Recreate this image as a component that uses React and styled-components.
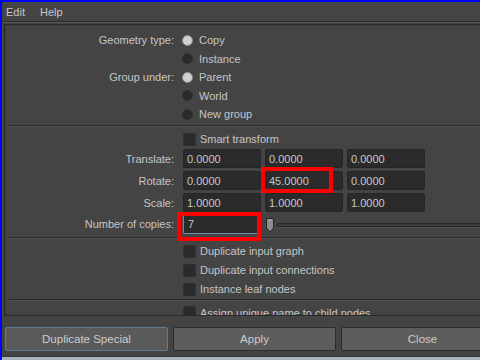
import React from "react";
import styled, { createGlobalStyle } from "styled-components";

const GlobalStyle = createGlobalStyle`
  html, body {
    margin: 0;
    padding: 0;
    background: #444444;
    overflow: hidden;
  }
  body {
    font-family: "Liberation Sans", Arial, sans-serif;
    font-size: 11px;
    color: #c6c6c6;
  }
`;

const Window = styled.div`
  width: 480px;
  height: 360px;
  box-sizing: border-box;
  border-top: 2px solid #0000ff;
  border-left: 2px solid #0000ff;
  background: #444444;
  display: flex;
  flex-direction: column;
  overflow: hidden;
`;

const MenuBar = styled.div`
  height: 19px;
  display: flex;
  align-items: center;
  gap: 15px;
  padding-left: 4px;
  border-bottom: 1px solid #2c2c2c;
  box-shadow: 0 1px 0 #585858;
`;

const MenuItem = styled.span`
  color: #c8c8c8;
`;

const Frame = styled.div`
  box-sizing: border-box;
  height: 292px;
  margin: 2px -20px 0 2px;
  border: 1px solid #2a2a2a;
  box-shadow: inset 1px 1px 0 #3a3a3a;
  overflow: hidden;
  flex-shrink: 0;
`;

const Section = styled.div`
  display: flex;
  flex-direction: column;
  gap: ${(p) => p.$gap || 0}px;
  padding-top: ${(p) => p.$top || 0}px;
`;

const Divider = styled.div`
  height: 0;
  margin: ${(p) => p.$mt || 0}px 0 0 4px;
  border-top: 1px solid #2a2a2a;
  border-bottom: 1px solid #505050;
`;

const Row = styled.div`
  display: grid;
  grid-template-columns: 169px 1fr;
  column-gap: 9px;
  align-items: center;
  height: ${(p) => p.$h || 18.5}px;
  margin-top: ${(p) => p.$mt || 0}px;
`;

const Label = styled.span`
  text-align: right;
  white-space: nowrap;
`;

const Option = styled.div`
  display: flex;
  align-items: center;
  gap: ${(p) => (p.$radio ? 6 : 4)}px;
  margin-left: ${(p) => (p.$radio ? -1 : 0)}px;
  white-space: nowrap;
`;

const Radio = styled.span`
  width: 11px;
  height: 11px;
  border-radius: 50%;
  box-sizing: border-box;
  background: ${(p) => (p.$on ? "#d0d0d0" : "#2a2a2a")};
  border: 1px solid ${(p) => (p.$on ? "#8a8a8a" : "#2f2f2f")};
`;

const Check = styled.span`
  width: 13px;
  height: 13px;
  box-sizing: border-box;
  border-radius: 2px;
  background: #2b2b2b;
  border: 1px solid #303030;
`;

const Fields = styled.div`
  display: flex;
  align-items: center;
  gap: 4px;
`;

const Field = styled.div`
  position: relative;
  box-sizing: border-box;
  width: 78px;
  height: ${(p) => (p.$focus ? 20 : 19)}px;
  padding-left: ${(p) => (p.$focus ? 4 : 3)}px;
  display: flex;
  align-items: center;
  background: #2b2b2b;
  border: 1px solid ${(p) => (p.$focus ? "#4d6379" : "#252525")};
  border-left-color: ${(p) => (p.$focus ? "#7290ad" : "#252525")};
  border-bottom-color: ${(p) => (p.$focus ? "#7290ad" : "#252525")};
  border-radius: 2px;
  color: #c8c8c8;
  flex-shrink: 0;
`;

const Marker = styled.div`
  position: absolute;
  left: ${(p) => p.$x}px;
  top: ${(p) => p.$y}px;
  width: ${(p) => p.$w}px;
  height: ${(p) => p.$h}px;
  box-sizing: border-box;
  border: 4px solid #ff0000;
  pointer-events: none;
`;

const Slider = styled.div`
  flex: 1;
  display: flex;
  align-items: center;
  gap: 1px;
  margin-top: 2px;
`;

const Track = styled.div`
  flex: 1;
  height: 2px;
  border: 1px solid #2a2a2a;
  border-radius: 2px;
  background: #3c3c3c;
  box-shadow: 0 1px 0 #505050;
`;

const ButtonBar = styled.div`
  display: flex;
  gap: 5px;
  padding-left: 3px;
  margin: 11px -40px 0 0;
`;

const Button = styled.div`
  flex: 0 0 163px;
  height: 24px;
  box-sizing: border-box;
  display: flex;
  align-items: center;
  justify-content: center;
  border-radius: 2px;
  background: ${(p) => (p.$active ? "#5a5a5a" : "#5d5d5d")};
  border: 1px solid ${(p) => (p.$active ? "#5e7d99" : "#2c2c2c")};
  color: #cccccc;
  font-size: 11.5px;
`;

const Footer = styled.div`
  margin-top: auto;
  height: 3px;
  background: #aab4c0;
  border-top: 1px solid #363636;
`;

function SliderHandle() {
  return (
    <svg width="10" height="15" viewBox="0 0 10 15">
      <path d="M1.5 0.5 H8.5 V10 L5 14 L1.5 10 Z" fill="#8c8c8c" stroke="#262626" />
      <path d="M3 2 H7" stroke="#a8a8a8" />
    </svg>
  );
}

function RadioOption({ on, children }) {
  return (
    <Option $radio>
      <Radio $on={on} />
      {children}
    </Option>
  );
}

function CheckOption({ children }) {
  return (
    <Option>
      <Check />
      {children}
    </Option>
  );
}

export default function App() {
  return (
    <>
      <GlobalStyle />
      <Window>
        <MenuBar>
          <MenuItem>Edit</MenuItem>
          <MenuItem>Help</MenuItem>
        </MenuBar>

        <Frame>
          <Section $top={6}>
            <Row>
              <Label>Geometry type:</Label>
              <RadioOption on>Copy</RadioOption>
            </Row>
            <Row>
              <Label />
              <RadioOption>Instance</RadioOption>
            </Row>
            <Row>
              <Label>Group under:</Label>
              <RadioOption on>Parent</RadioOption>
            </Row>
            <Row>
              <Label />
              <RadioOption>World</RadioOption>
            </Row>
            <Row>
              <Label />
              <RadioOption>New group</RadioOption>
            </Row>
          </Section>

          <Divider $mt={1.5} />

          <Section $top={3}>
            <Row $h={18}>
              <Label />
              <CheckOption>Smart transform</CheckOption>
            </Row>
            <Row $h={19} $mt={1}>
              <Label>Translate:</Label>
              <Fields>
                <Field>0.0000</Field>
                <Field>0.0000</Field>
                <Field>0.0000</Field>
              </Fields>
            </Row>
            <Row $h={19} $mt={3}>
              <Label>Rotate:</Label>
              <Fields>
                <Field>0.0000</Field>
                <Field>
                  45.0000
                  <Marker $x={-5} $y={-5} $w={72} $h={26} />
                </Field>
                <Field>0.0000</Field>
              </Fields>
            </Row>
            <Row $h={19} $mt={3}>
              <Label>Scale:</Label>
              <Fields>
                <Field>1.0000</Field>
                <Field>1.0000</Field>
                <Field>1.0000</Field>
              </Fields>
            </Row>
            <Row $h={20} $mt={2}>
              <Label>Number of copies:</Label>
              <Fields>
                <Field $focus>
                  7
                  <Marker $x={-7} $y={-3} $w={84} $h={29} />
                </Field>
                <Slider>
                  <SliderHandle />
                  <Track />
                </Slider>
              </Fields>
            </Row>
          </Section>

          <Divider $mt={3} />

          <Section $top={2.5}>
            <Row $h={19}>
              <Label />
              <CheckOption>Duplicate input graph</CheckOption>
            </Row>
            <Row $h={19}>
              <Label />
              <CheckOption>Duplicate input connections</CheckOption>
            </Row>
            <Row $h={19}>
              <Label />
              <CheckOption>Instance leaf nodes</CheckOption>
            </Row>
          </Section>

          <Divider $mt={0.5} />

          <Section $top={2}>
            <Row $h={19}>
              <Label />
              <CheckOption>Assign unique name to child nodes</CheckOption>
            </Row>
          </Section>
        </Frame>

        <ButtonBar>
          <Button $active>Duplicate Special</Button>
          <Button>Apply</Button>
          <Button>Close</Button>
        </ButtonBar>

        <Footer />
      </Window>
    </>
  );
}
